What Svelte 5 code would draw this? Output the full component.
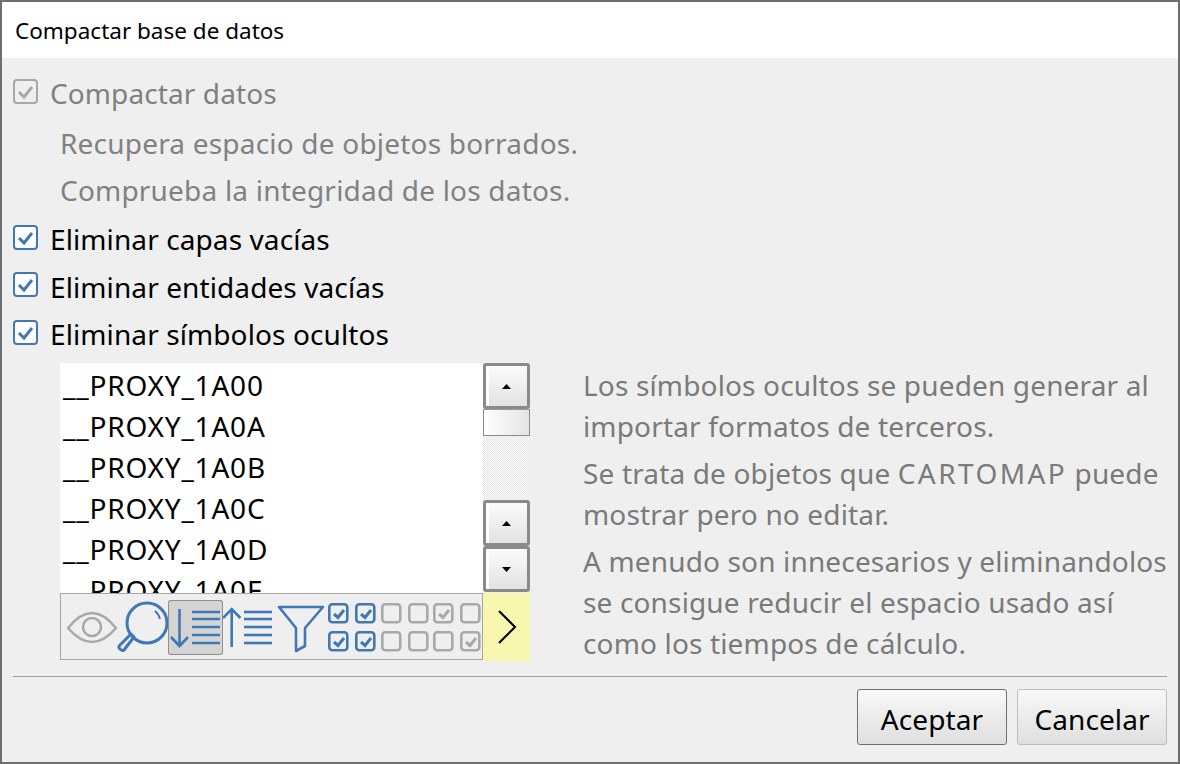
<script>
  const symbols = ['__PROXY_1A00', '__PROXY_1A0A', '__PROXY_1A0B', '__PROXY_1A0C', '__PROXY_1A0D', '__PROXY_1A0E'];
  const boxes = [
    { x: 328, y: 603, on: true, tick: true }, { x: 355, y: 603, on: true, tick: true },
    { x: 381, y: 603 }, { x: 408, y: 603 }, { x: 433, y: 603, tick: true }, { x: 460, y: 603 },
    { x: 328, y: 631, on: true, tick: true }, { x: 355, y: 631, on: true, tick: true },
    { x: 381, y: 631 }, { x: 408, y: 631 }, { x: 433, y: 631 }, { x: 460, y: 631, tick: true }
  ];
  const lines = [612, 619, 627, 635, 643];
</script>

{#snippet check(disabled)}
  <svg class="check" viewBox="0 0 25 25" aria-hidden="true">
    <rect x="1" y="1" width="23" height="23" rx="3" fill={disabled ? '#efefef' : '#fff'} stroke={disabled ? '#a8a8a8' : '#3f78b4'} stroke-width="2" />
    <path d="M6 13l5 5 8-10" fill="none" stroke={disabled ? '#a8a8a8' : '#3f78b4'} stroke-width="3" />
  </svg>
{/snippet}

{#snippet scrollBtn(dir)}
  <div class="sbtn">
    <svg viewBox="0 0 9 5" width="9" height="5" aria-hidden="true">
      <path d={dir === 'up' ? 'M4.5 0L9 5H0z' : 'M0 0H9L4.5 5z'} fill="#000" />
    </svg>
  </div>
{/snippet}

<div class="win">
  <header>Compactar base de datos</header>
  <main>
    <label class="row disabled">{@render check(true)}<span>Compactar datos</span></label>
    <p class="note first">Recupera espacio de objetos borrados.</p>
    <p class="note">Comprueba la integridad de los datos.</p>
    <label class="row after">{@render check(false)}<span>Eliminar capas vacías</span></label>
    <label class="row">{@render check(false)}<span>Eliminar entidades vacías</span></label>
    <label class="row">{@render check(false)}<span>Eliminar símbolos ocultos</span></label>

    <section class="panel">
      <div class="left">
        <div class="listwrap">
          <ul>
            {#each symbols as s}<li>{s}</li>{/each}
          </ul>
          <div class="scroll">
            {@render scrollBtn('up')}
            <div class="thumb"></div>
            <div class="track"></div>
            {@render scrollBtn('up')}
            {@render scrollBtn('down')}
          </div>
        </div>
        <div class="toolwrap">
          <div class="tools">
            <svg width="50" height="55" viewBox="67 600 50 55" aria-hidden="true">
              <g fill="none" stroke="#a9a9a9" stroke-width="2.6">
                <path d="M68 628Q92 598 116 628Q92 656 68 628z" />
                <circle cx="92" cy="627" r="9" />
              </g>
            </svg>
            <svg width="51" height="55" viewBox="117 600 51 55" aria-hidden="true">
              <g fill="none" stroke="#3f78b2" stroke-width="3">
                <circle cx="147" cy="623" r="20" />
                <path d="M155 611a14 14 0 0 1 5 8" stroke-width="1.8" />
                <path d="M134 637l-3-3-11 11c-2 2-1 3 0 4s3 2 4 1z" stroke-linejoin="round" />
              </g>
            </svg>
            <svg class="sel" width="55" height="55" viewBox="168 600 55 55" aria-hidden="true">
              <g fill="none" stroke="#3f78b2" stroke-width="2.6">
                <path d="M179.500 609V646M171 637l8.500 9 8.500-9" />
                {#each lines as y}<path d={`M192 ${y}H220`} />{/each}
              </g>
            </svg>
            <svg width="52" height="55" viewBox="223 600 52 55" aria-hidden="true">
              <g fill="none" stroke="#3f78b2" stroke-width="2.6">
                <path d="M231.700 647V609M223 618l8.700-9 8.700 9" />
                {#each lines as y}<path d={`M244 ${y}H272`} />{/each}
              </g>
            </svg>
            <svg class="fil" width="48" height="55" viewBox="277 600 48 55" aria-hidden="true">
              <path d="M279 607H323L305 628V646L296 651V628z" fill="none" stroke="#3f78b2" stroke-width="2.6" stroke-linejoin="round" />
            </svg>
            <svg class="grid" width="154" height="55" viewBox="327 600 154 55" aria-hidden="true">
              {#each boxes as b}
                <rect x={b.x + 1.300} y={b.y + 1.300} width="18" height="18" rx="3" fill="none" stroke={b.on ? '#3f78b2' : '#a9a9a9'} stroke-width="2.6" />
                {#if b.tick}
                  <path d={`M${b.x + 6} ${b.y + 11}l4 3.500 6-7.500`} fill="none" stroke={b.on ? '#3f78b2' : '#a9a9a9'} stroke-width="3" />
                {/if}
              {/each}
            </svg>
          </div>
          <div class="next">
            <svg width="20" height="34" viewBox="0 0 20 34" aria-hidden="true">
              <path d="M2 1L18 17L2 33" fill="none" stroke="#000" stroke-width="2" />
            </svg>
          </div>
        </div>
      </div>
      <div class="help">
        <p>Los símbolos ocultos se pueden generar al importar formatos de terceros.</p>
        <p>Se trata de objetos que <span class="caps">CARTOMAP</span> puede mostrar pero no editar.</p>
        <p>A menudo son innecesarios y eliminandolos se consigue reducir el espacio usado así como los tiempos de cálculo.</p>
      </div>
    </section>

    <footer>
      <button class="primary">Aceptar</button>
      <button>Cancelar</button>
    </footer>
  </main>
</div>

<style>
  :global(body) { margin: 0; background: #efefef; }
  .win {
    box-sizing: border-box;
    width: 1180px;
    height: 764px;
    border: 2px solid #6f6f6f;
    background: #efefef;
    font-family: "Noto Sans", "Open Sans", sans-serif;
    color: #000;
    display: flex;
    flex-direction: column;
    overflow: hidden;
  }
  header {
    height: 56px;
    flex: none;
    background: #fff;
    font-size: 22.500px;
    line-height: 57px;
    padding-left: 13px;
  }
  main {
    flex: 1;
    display: flex;
    flex-direction: column;
    padding: 12px 11px 0;
    font-size: 28px;
    letter-spacing: 0.100px;
  }
  .row {
    display: flex;
    align-items: center;
    gap: 12px;
    height: 47.500px;
    line-height: 47.500px;
  }
  .row.after { margin-top: 2px; }
  .row.disabled { color: #808080; }
  .check { width: 25px; height: 25px; flex: none; margin-top: -5px; }
  .note {
    margin: 0;
    height: 47px;
    line-height: 47px;
    padding-left: 47px;
    color: #7e8282;
    letter-spacing: 0.200px;
  }
  .note.first { margin-top: 2.500px; }
  .panel { display: flex; margin-top: 4.500px; height: 298px; }
  .left { margin-left: 47px; width: 470px; flex: none; }
  .listwrap { display: flex; height: 230px; }
  ul {
    list-style: none;
    margin: 0;
    padding: 2px 0 0 3px;
    width: 420px;
    background: #fff;
    overflow: hidden;
    flex: none;
    letter-spacing: 0.800px;
  }
  li { height: 41px; line-height: 41px; }
  .scroll {
    width: 47px;
    display: flex;
    flex-direction: column;
    padding-bottom: 1px;
  }
  .sbtn {
    box-sizing: border-box;
    height: 46px;
    flex: none;
    border: 3px solid #8a8a8a;
    border-radius: 3px;
    background: linear-gradient(#fbfbfb, #e2e2e2);
    box-shadow: inset 3px 0 0 #fff;
    display: flex;
    align-items: center;
    justify-content: center;
  }
  .thumb {
    box-sizing: border-box;
    height: 27px;
    flex: none;
    border: 1px solid #8a8a8a;
    border-top-color: #999;
    background: linear-gradient(90deg, #fff, #e4e4e4);
  }
  .track {
    flex: 1;
    background: repeating-conic-gradient(#e6e6e6 0 25%, #fafafa 0 50%) 0 0 / 2px 2px;
  }
  .toolwrap { display: flex; height: 68px; }
  .tools {
    box-sizing: border-box;
    width: 423px;
    height: 67px;
    flex: none;
    border: 1px solid #a6a6a6;
    padding: 6px 0 0 6px;
    display: flex;
    align-items: flex-start;
  }
  .tools svg { flex: none; }
  .sel {
    background: #d4d4d4;
    box-shadow: inset 0 0 0 1px #8f8f8f;
    border-radius: 3px;
  }
  .fil { margin-left: 2px; }
  .grid { margin-left: 2px; }
  .next {
    width: 47px;
    background: #f7f7af;
    display: flex;
    align-items: center;
    justify-content: center;
    flex: none;
  }
  .help {
    margin-left: 53px;
    width: 592px;
    color: #7a7a7a;
    line-height: 41px;
    letter-spacing: 0.150px;
    flex: none;
  }
  .caps { letter-spacing: 2.400px; }
  .help p { margin: 0 0 6px; }
  .help p:first-child { margin-top: 2px; }
  footer {
    margin-top: 15px;
    border-top: 1px solid #a0a0a0;
    padding-top: 12px;
    display: flex;
    justify-content: flex-end;
    gap: 10px;
  }
  button {
    box-sizing: border-box;
    width: 150px;
    height: 56px;
    padding: 4px 0 0;
    border: 1px solid #bdbdbd;
    border-radius: 3px;
    background: linear-gradient(#f8f8f8, #dfdfdf);
    font: inherit;
    letter-spacing: inherit;
    color: #000;
  }
  button.primary { border-color: #6f6f6f; }
</style>
